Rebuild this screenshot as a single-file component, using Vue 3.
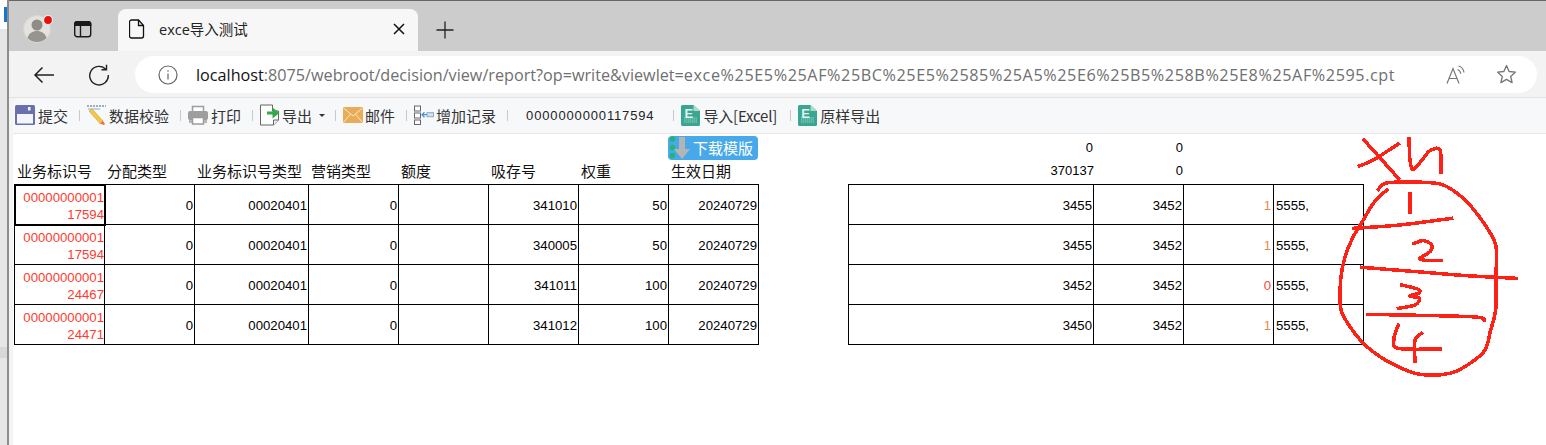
<script setup>
const rows = [
  { id: ['00000000001', '17594'], code: '341010', weight: 50, a: 3455, flag: 1 },
  { id: ['00000000001', '17594'], code: '340005', weight: 50, a: 3455, flag: 1 },
  { id: ['00000000001', '24467'], code: '341011', weight: 100, a: 3452, flag: 0 },
  { id: ['00000000001', '24471'], code: '341012', weight: 100, a: 3450, flag: 1 }
]
const heads = ['业务标识号', '分配类型', '业务标识号类型', '营销类型', '额度', '吸存号', '权重', '生效日期']

// Catmull-Rom through the points of a freehand stroke
function ink(p) {
  let d = `M${p[0][0]} ${p[0][1]}`
  for (let i = 0; i < p.length - 1; i++) {
    const a = p[i - 1] || p[i], b = p[i], c = p[i + 1], e = p[i + 2] || c
    d += `C${b[0] + (c[0] - a[0]) / 6} ${b[1] + (c[1] - a[1]) / 6} ${c[0] - (e[0] - b[0]) / 6} ${c[1] - (e[1] - b[1]) / 6} ${c[0]} ${c[1]}`
  }
  return d
}
const strokes = [
  [[385, 178], [405, 160], [460, 156], [520, 157], [580, 165], [640, 205], [680, 250], [715, 300], [738, 350], [738, 440], [737, 540], [722, 600], [705, 660], [660, 700], [600, 730], [510, 733], [440, 708], [390, 680], [340, 640], [300, 590], [272, 535], [272, 450], [285, 380], [310, 320], [340, 270], [370, 220], [410, 180]],
  [[342, 30], [445, 145]],
  [[328, 108], [370, 90], [445, 42]],
  [[477, 25], [480, 90], [490, 118], [520, 85], [540, 62], [570, 60], [573, 128]],
  [[480, 190], [480, 248]],
  [[310, 295], [450, 285], [605, 265]],
  [[492, 340], [520, 332], [545, 345], [540, 365], [510, 388], [575, 392]],
  [[335, 412], [500, 425], [650, 437], [800, 445]],
  [[455, 465], [505, 478], [505, 490], [478, 498], [508, 505], [495, 525], [445, 535]],
  [[352, 553], [660, 560], [703, 570]],
  [[445, 585], [432, 625], [445, 655], [570, 657]],
  [[515, 610], [495, 630], [495, 695]]
].map(ink)
</script>

<template>
  <div class="screen">
    <div class="desk"></div>
    <div class="window">
      <div class="tabbar">
        <div class="avatar">
          <svg width="32" height="32" viewBox="0 0 32 32">
            <circle cx="15" cy="15" r="13.5" fill="#e4e2de" stroke="#d8d6d2" />
            <circle cx="15" cy="11" r="5.5" fill="#8f8b86" />
            <path d="M5.500 24c1.500-5 5-7 9.500-7s8 2 9.500 7c-2.500 2.500-6 4-9.500 4s-7-1.500-9.500-4z" fill="#97938e" />
            <circle cx="26" cy="6" r="4.500" fill="#e80f0f" stroke="#f0f0f0" stroke-width="1.200" />
          </svg>
        </div>
        <svg class="ws" width="20" height="20" viewBox="0 0 20 20" fill="none" stroke="#1a1a1a" stroke-width="1.400">
          <rect x="1.700" y="2.700" width="16" height="15" rx="2.500" />
          <path d="M1.700 5.500c0-1.500 1-2.800 2.500-2.800h11c1.500 0 2.500 1.300 2.500 2.800v.8H1.700z" fill="#1a1a1a" />
          <path d="M7.500 6v11.500" />
        </svg>
        <div class="tab">
          <svg width="16" height="20" viewBox="0 0 16 20" fill="none" stroke="#111" stroke-width="1.300">
            <path d="M2.500 1h7l5 5.500v10.500a2 2 0 0 1-2 2h-10a2 2 0 0 1-2-2v-14a2 2 0 0 1 2-2z" />
            <path d="M9.500 1v5.500h5" />
          </svg>
          <span class="tabtitle">exce导入测试</span>
          <svg class="close" width="12" height="12" viewBox="0 0 12 12" stroke="#111" stroke-width="1.500"><path d="M1 1l10 10M11 1l-10 10" /></svg>
        </div>
        <svg class="plus" width="18" height="18" viewBox="0 0 18 18" stroke="#222" stroke-width="1.300"><path d="M9 0.500v17M.5 9h17" /></svg>
      </div>
      <div class="navbar">
        <svg class="back" width="22" height="18" viewBox="0 0 22 18" fill="none" stroke="#222" stroke-width="1.500"><path d="M21 9H2M9.500 1.500L2 9l7.500 7.500" /></svg>
        <svg class="reload" width="22" height="22" viewBox="0 0 22 22" fill="none" stroke="#222" stroke-width="1.400"><path d="M18 5.500A9.300 9.300 0 1 0 20.300 11" /><path d="M18.500 .8v5h-5" /></svg>
        <div class="omni">
          <svg class="info" width="20" height="20" viewBox="0 0 20 20" fill="none" stroke="#666" stroke-width="1.200"><circle cx="10" cy="10" r="9" /><path d="M10 8.500v6" /><path d="M10 5.200v1.500" /></svg>
          <span class="url"><b>localhost</b>:8075/webroot/decision/view/report?op=write&amp;viewlet=<em>exce%25E5%25AF%25BC%25E5%2585%25A5%25E6%25B5%258B%25E8%25AF%2595.cpt</em></span>
          <svg class="aloud" width="20" height="20" viewBox="0 0 20 20" fill="none" stroke="#777" stroke-width="1.200"><path d="M1 18.500L7 3.500l6 15M3.200 13.500h7.600" /><path d="M11.500 4.500c1.800.6 3 2.200 3.300 4.200M12.500 1c3 .8 5 3.200 5.500 6.500" /></svg>
          <svg class="star" width="21" height="21" viewBox="0 0 20 20" fill="none" stroke="#777" stroke-width="1.300"><path d="M10 1.500l2.500 5.600 6 .6-4.500 4.100 1.300 6-5.300-3.100-5.300 3.100 1.300-6L1.500 7.700l6-.6z" stroke-linejoin="round" /></svg>
        </div>
      </div>
      <div class="page">
        <div class="toolbar">
          <span class="tool roomy">
            <svg width="20" height="20" viewBox="0 0 20 20"><rect width="20" height="20" rx="1.500" fill="#6a70ae" /><rect x="2" y="9" width="16" height="9.500" fill="#f4f4f9" /><rect x="13" y="2" width="2.500" height="3.500" fill="#f4f4f9" /></svg>
            <span>提交</span>
          </span>
          <i class="sep"></i>
          <span class="tool">
            <svg width="20" height="20" viewBox="0 0 20 20"><path d="M0 1h19" stroke="#8a8fa5" stroke-width="1.500" stroke-dasharray="2 1" /><path d="M1 4h12" stroke="#7ab3dc" stroke-width="1" /><path d="M2 6l3-2 11 12-3 2.500z" fill="#f2c84b" stroke="#d39a2c" stroke-width=".6" /><path d="M13 18.500l3-2.500 2 3-1 1z" fill="#ee6a4d" /></svg>
            <span>数据校验</span>
          </span>
          <i class="sep"></i>
          <span class="tool roomy">
            <svg width="20" height="20" viewBox="0 0 20 20"><rect x="4.500" y="1.500" width="11" height="6" fill="#fff" stroke="#9c9c9c" stroke-width="1.500" /><rect x="0" y="6" width="20" height="9" rx="2" fill="#9e9e9e" /><rect x="4.500" y="12.500" width="11" height="6.500" fill="#fff" stroke="#9c9c9c" stroke-width="1.500" /><rect x="1" y="15" width="3" height="3" fill="#b5b5b5" /><rect x="16" y="15" width="3" height="3" fill="#b5b5b5" /></svg>
            <span>打印</span>
          </span>
          <i class="sep"></i>
          <span class="tool">
            <svg width="20" height="22" viewBox="0 0 20 22"><path d="M.500 1h12v6h6v9l-5 5h-13z" fill="#fdfdfd" stroke="#666" /><path d="M13.500 21v-5h5" fill="#eee" stroke="#666" /><path d="M7 7.500h5.500v-4l7 5.500-7 5.500v-4H7z" fill="#36a84a" /></svg>
            <span>导出</span>
            <b class="caret"></b>
          </span>
          <i class="sep"></i>
          <span class="tool">
            <svg width="20" height="16" viewBox="0 0 20 16"><rect width="20" height="16" rx="1" fill="#e9ac58" /><path d="M.500 1l9.500 8L19.500 1M.500 15.500L7.500 7M19.500 15.500L12.500 7" fill="none" stroke="#fbe7c4" /></svg>
            <span>邮件</span>
          </span>
          <i class="sep"></i>
          <span class="tool">
            <svg width="20" height="20" viewBox="0 0 20 20" fill="#fff" stroke="#66676b"><rect x=".500" y="1" width="6" height="5" /><rect x=".500" y="8" width="6" height="5" /><rect x=".500" y="15" width="6" height="4.500" /><rect x="13" y="7.700" width="6.500" height="4" fill="#cfe4f4" stroke="#8fa9bd" /><path d="M13 9.700H8m2.500-2.500L8 9.700l2.500 2.500" fill="none" stroke="#3f97d8" stroke-width="1.300" /></svg>
            <span>增加记录</span>
          </span>
          <i class="sep"></i>
          <span class="serial">0000000000117594</span>
          <i class="sep"></i>
          <span class="tool roomy">
            <svg width="19" height="21" viewBox="0 0 19 21"><path d="M1.500 0h11l6.500 6v13.500a1.500 1.500 0 0 1-1.500 1.500h-16A1.500 1.500 0 0 1 0 19.500v-18A1.500 1.500 0 0 1 1.500 0z" fill="#3aa590" /><path d="M12.500 0l6.500 6h-6.500z" fill="#a9dccf" /><path d="M3 13h13M3 15h13M3 17h13" stroke="#8fd0c0" stroke-dasharray="1.500 .5" /></svg>
            <b class="excelE">E</b>
            <span class="brk">导入[Excel]</span>
          </span>
          <i class="sep"></i>
          <span class="tool roomy">
            <svg width="19" height="21" viewBox="0 0 19 21"><path d="M1.500 0h11l6.500 6v13.500a1.500 1.500 0 0 1-1.500 1.500h-16A1.500 1.500 0 0 1 0 19.500v-18A1.500 1.500 0 0 1 1.500 0z" fill="#3aa590" /><path d="M12.500 0l6.500 6h-6.500z" fill="#a9dccf" /><path d="M3 13h13M3 15h13M3 17h13" stroke="#8fd0c0" stroke-dasharray="1.500 .5" /></svg>
            <b class="excelE">E</b>
            <span>原样导出</span>
          </span>
        </div>
        <div class="report">
          <div class="topline">
            <div class="dlwrap">
              <div class="dl">
                <svg width="30" height="24" viewBox="0 0 30 24"><circle cx="4.500" cy="3" r="2.700" fill="#22b573" /><circle cx="4.500" cy="11.500" r="2.700" fill="#22b573" /><circle cx="4.500" cy="19.500" r="2.700" fill="#22b573" /><path d="M11 1h6v12h5l-8 10-8-10h5z" fill="#b4b4b4" /></svg>
                <span>下载模版</span>
              </div>
            </div>
            <div class="sums">
              <span>0</span><span>0</span>
            </div>
          </div>
          <div class="headline">
            <div class="heads">
              <span v-for="h in heads" :key="h">{{ h }}</span>
            </div>
            <div class="sums second">
              <span>370137</span><span>0</span>
            </div>
          </div>
          <div class="tables">
            <table class="left">
              <colgroup>
                <col style="width:90px" /><col style="width:90px" /><col style="width:114px" /><col style="width:90px" />
                <col style="width:90px" /><col style="width:90px" /><col style="width:90px" /><col style="width:90px" />
              </colgroup>
              <tr v-for="(r, i) in rows" :key="i">
                <td class="idcell" :class="{ picked: i === 0 }"><div>{{ r.id[0] }}</div><div>{{ r.id[1] }}</div></td>
                <td>0</td><td>00020401</td><td>0</td><td></td>
                <td>{{ r.code }}</td><td>{{ r.weight }}</td><td>20240729</td>
              </tr>
            </table>
            <table class="right">
              <colgroup>
                <col style="width:245px" /><col style="width:90px" /><col style="width:90px" /><col style="width:90px" />
              </colgroup>
              <tr v-for="(r, i) in rows" :key="i">
                <td>{{ r.a }}</td><td>3452</td>
                <td :class="r.flag ? 'flag1' : 'flag0'">{{ r.flag }}</td>
                <td class="txt">5555,</td>
              </tr>
            </table>
          </div>
        </div>
      </div>
    </div>
    <svg class="ink" width="296" height="260" viewBox="0 0 888 780" fill="none" stroke="#fe2216" stroke-width="10.500" stroke-linejoin="round" stroke-linecap="square" shape-rendering="crispEdges">
      <path v-for="(d, i) in strokes" :key="i" :d="d" />
    </svg>
  </div>
</template>

<style>
html, body { margin: 0; background: #fff; }
</style>

<style scoped>
.screen { position: relative; width: 1546px; height: 445px; overflow: hidden; display: flex; font-family: "Noto Sans CJK SC", sans-serif; }
.desk { width: 9px; flex: none; box-sizing: border-box; border-right: 2px solid #8c8c8c; background: linear-gradient(#1577c9, #1577c9) 4px 7px / 3px 15px no-repeat, linear-gradient(#fff 0 29px, #e6e6e6 29px 347px, #d8d8d8 347px 358px, #e6e6e6 358px); }
.window { flex: 1; display: flex; flex-direction: column; min-width: 0; background: #f4f4f4; }
.tabbar { height: 51px; flex: none; box-sizing: border-box; background: #cccccc; border-top: 1px solid #666; display: flex; align-items: flex-end; position: relative; }
.avatar { position: absolute; left: 13px; top: 13px; line-height: 0; }
.ws { position: absolute; left: 64px; top: 18px; }
.tab { margin-left: 109px; width: 300px; height: 42px; box-sizing: border-box; background: #f7f7f7; border-radius: 8px 8px 0 0; display: flex; align-items: center; padding: 0 13px 3px 11px; }
.tabtitle { flex: 1; margin-left: 14px; font: 14.500px "Open Sans", "Noto Sans CJK SC", sans-serif; color: #222; }
.plus { position: absolute; left: 427px; top: 20px; }
.navbar { height: 47px; flex: none; background: #f3f3f3; display: flex; align-items: center; box-sizing: border-box; padding-top: 1px; border-bottom: 1px solid #e3e3e3; }
.back { margin-left: 24px; }
.reload { margin-left: 33px; }
.omni { margin-left: 25px; width: 1402px; height: 37px; background: #fff; border-radius: 19px; display: flex; align-items: center; }
.info { margin-left: 23px; }
.url { margin-left: 18px; flex: 1; font: 16.200px "Open Sans", sans-serif; color: #6f6f6f; white-space: nowrap; }
.url b { font-weight: 400; color: #111; }
.url em { font-style: normal; letter-spacing: .585px; }
.aloud { margin-right: 30px; }
.star { margin-right: 20px; }
.page { flex: 1; margin-left: 4px; background: #fff; border-radius: 8px 0 0 0; overflow: hidden; display: flex; flex-direction: column; }
.toolbar { height: 36px; flex: none; box-sizing: border-box; background: #f7f8fa; border-bottom: 1px solid #e6e6e6; display: flex; align-items: center; padding: 0 0 1px 2px; font-size: 15px; color: #333; }
.tool { display: inline-flex; align-items: center; gap: 2px; position: relative; white-space: nowrap; }
.tool.roomy { gap: 3px; }
.brk { letter-spacing: -.2px; margin-right: 2px; }
.sep { width: 1px; height: 11px; background: #c9c9c9; margin: 0 7px 0 11px; flex: none; }
.caret { width: 0; height: 0; border: 3.500px solid transparent; border-top-color: #333; border-bottom: 0; margin: 0 -1px 0 5px; }
.excelE { position: absolute; left: 3px; top: 1px; font: 700 13px "Liberation Sans", sans-serif; color: #dff3ee; }
.serial { font: 13px "Liberation Sans", sans-serif; color: #222; letter-spacing: .85px; margin: 0 8px 0 11px; white-space: nowrap; }
.report { flex: 1; padding-left: 1px; color: #000; position: relative; }
.topline { height: 28px; display: flex; box-sizing: border-box; padding-top: 2px; }
.dlwrap { width: 744px; }
.dl { margin-left: 654px; width: 90px; height: 24px; display: flex; align-items: center; background: #47a9ea; border-radius: 4px; color: #fff; font-size: 15px; line-height: 24px; white-space: nowrap; }
.dl svg { flex: none; margin-right: -5px; width: 30px; }
.sums { display: flex; font: 13px/24px "Liberation Sans", sans-serif; margin-left: 90px; }
.sums span { display: block; text-align: right; }
.sums span:nth-child(1) { width: 245px; }
.sums span:nth-child(2) { width: 90px; }
.headline { height: 22px; display: flex; }
.heads { width: 744px; display: grid; grid-template-columns: 90px 90px 114px 90px 90px 90px 90px 90px; font-size: 15px; line-height: 18px; color: #111; white-space: nowrap; }
.heads span { padding-left: 3px; }
.sums.second { line-height: 18px; }
.sums.second span:nth-child(1) { width: 246px; }
.sums.second span:nth-child(2) { width: 89px; }
.tables { display: flex; gap: 89px; }
table { border-collapse: collapse; table-layout: fixed; font: 13.200px/17px "Liberation Sans", sans-serif; color: #000; }
table.left { width: 744px; }
table.right { width: 515px; }
td { height: 40px; padding: 2px 1px 0 0; border: 1px solid #000; text-align: right; box-sizing: border-box; vertical-align: middle; }
.idcell { color: #ff3b30; padding-right: 0; }
.idcell.picked { outline: 2px solid #000; outline-offset: -1px; }
.flag1 { color: #f08a4b; padding-right: 2px; }
.flag0 { color: #ee4b3a; padding-right: 2px; }
.txt { text-align: left; padding-left: 2px; }
.ink { position: absolute; left: 1250px; top: 130px; pointer-events: none; }
</style>
